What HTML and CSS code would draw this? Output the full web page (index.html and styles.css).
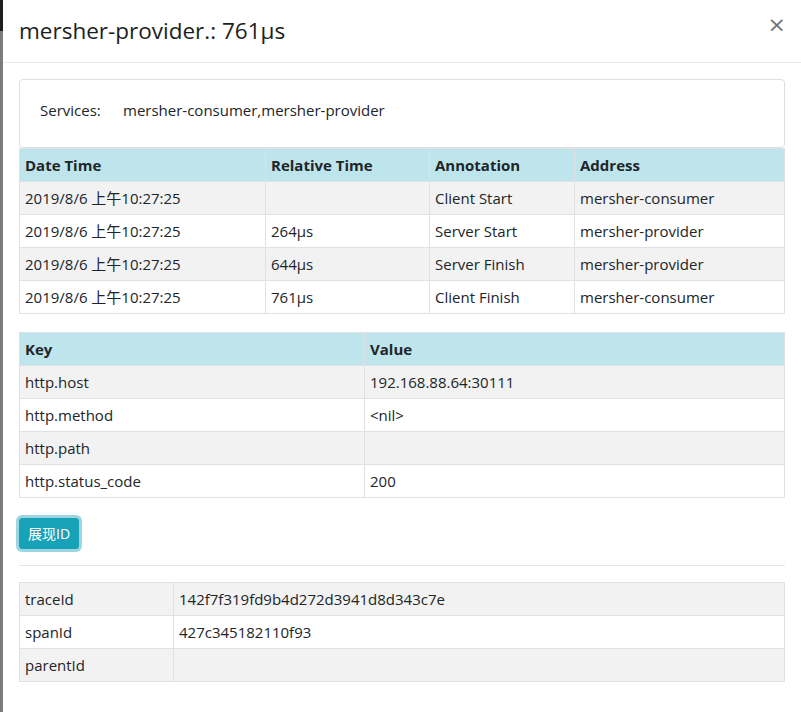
FILE: index.html
```html
<!DOCTYPE html>
<html lang="zh">
<head>
<meta charset="utf-8">
<title>mersher-provider.: 761µs</title>
<link rel="stylesheet" href="styles.css">
</head>
<body>
<div class="screen">
  <div class="backdrop-edge"></div>
  <div class="modal">
    <div class="modal-header">
      <h4 class="modal-title">mersher-provider.: 761µs</h4>
      <button class="close" type="button">×</button>
    </div>
    <div class="modal-body">
      <div class="card">
        <div class="card-body"><span class="label">Services:</span><span>mersher-consumer,mersher-provider</span></div>
      </div>
      <table class="tbl">
        <colgroup><col style="width:246px"><col style="width:164px"><col style="width:145px"><col></colgroup>
        <thead>
          <tr><th>Date Time</th><th>Relative Time</th><th>Annotation</th><th>Address</th></tr>
        </thead>
        <tbody>
          <tr><td>2019/8/6 上午10:27:25</td><td></td><td>Client Start</td><td>mersher-consumer</td></tr>
          <tr><td>2019/8/6 上午10:27:25</td><td>264µs</td><td>Server Start</td><td>mersher-provider</td></tr>
          <tr><td>2019/8/6 上午10:27:25</td><td>644µs</td><td>Server Finish</td><td>mersher-provider</td></tr>
          <tr><td>2019/8/6 上午10:27:25</td><td>761µs</td><td>Client Finish</td><td>mersher-consumer</td></tr>
        </tbody>
      </table>
      <table class="tbl tbl-gap">
        <colgroup><col style="width:345px"><col></colgroup>
        <thead>
          <tr><th>Key</th><th>Value</th></tr>
        </thead>
        <tbody>
          <tr><td>http.host</td><td>192.168.88.64:30111</td></tr>
          <tr><td>http.method</td><td>&lt;nil&gt;</td></tr>
          <tr><td>http.path</td><td></td></tr>
          <tr><td>http.status_code</td><td>200</td></tr>
        </tbody>
      </table>
      <button class="btn" type="button">展现ID</button>
      <hr class="divider">
      <table class="tbl">
        <colgroup><col style="width:154px"><col></colgroup>
        <tbody>
          <tr><td>traceId</td><td>142f7f319fd9b4d272d3941d8d343c7e</td></tr>
          <tr><td>spanId</td><td>427c345182110f93</td></tr>
          <tr><td>parentId</td><td></td></tr>
        </tbody>
      </table>
    </div>
  </div>
</div>
</body>
</html>
```

FILE: styles.css
```css
* { box-sizing: border-box; }
html, body { margin: 0; padding: 0; height: 100%; }
body {
  font-family: "Segoe UI", "Open Sans", "Noto Sans CJK SC", sans-serif;
  font-size: 15px;
  line-height: 1.5;
  color: #212529;
  background: #fff;
  overflow: hidden;
}
.screen { display: flex; height: 712px; }
.backdrop-edge {
  width: 3px;
  flex: none;
  background: linear-gradient(#1e1e1e 0, #1e1e1e 31px, #7b7b7b 31px, #7b7b7b 100%);
}
.modal { flex: 1; background: #fff; }
.modal-header {
  display: flex;
  align-items: flex-start;
  padding: 16px;
  border-bottom: 1px solid #e9ecef;
}
.modal-title {
  margin: 0;
  font-size: 22.5px;
  font-weight: 500;
  line-height: 30px;
  color: #1b1e21;
}
.close {
  margin: -18px -17px -16px auto;
  padding: 16px;
  border: 0;
  background: transparent;
  font-family: "DejaVu Sans", sans-serif;
  font-size: 22px;
  font-weight: 400;
  line-height: 1;
  color: #000;
  opacity: .55;
}
.modal-body { padding: 16px; }
.card {
  border: 1px solid #dfdfdf;
  border-radius: 4px;
}
.card-body { padding: 19px 20px 24px; line-height: 22px; height: 67px; }
.label { display: inline-block; width: 83px; }
.tbl {
  width: 100%;
  table-layout: fixed;
  border-collapse: collapse;
}
.tbl-gap { margin-top: 18px; }
.tbl th, .tbl td {
  border: 1px solid #dee2e6;
  padding: 5px 5px;
  text-align: left;
  vertical-align: top;
  line-height: 22px;
  height: 33px;
  white-space: nowrap;
}
.tbl th { font-weight: 700; background: #bee5eb; }
.tbl tbody tr:nth-child(odd) td { background: #f2f2f2; }
.btn {
  display: block;
  margin-top: 20px;
  padding: 4px 8px;
  font-family: "Segoe UI", "Open Sans", "Noto Sans CJK SC", sans-serif;
  font-size: 14px;
  line-height: 21px;
  color: #fff;
  background: #17a2b8;
  border: 1px solid #17a2b8;
  border-radius: 3px;
  box-shadow: 0 0 0 3px rgba(58, 176, 195, .5);
}
.divider {
  margin: 16px 0;
  border: 0;
  border-top: 1px solid rgba(0, 0, 0, .1);
}
```
